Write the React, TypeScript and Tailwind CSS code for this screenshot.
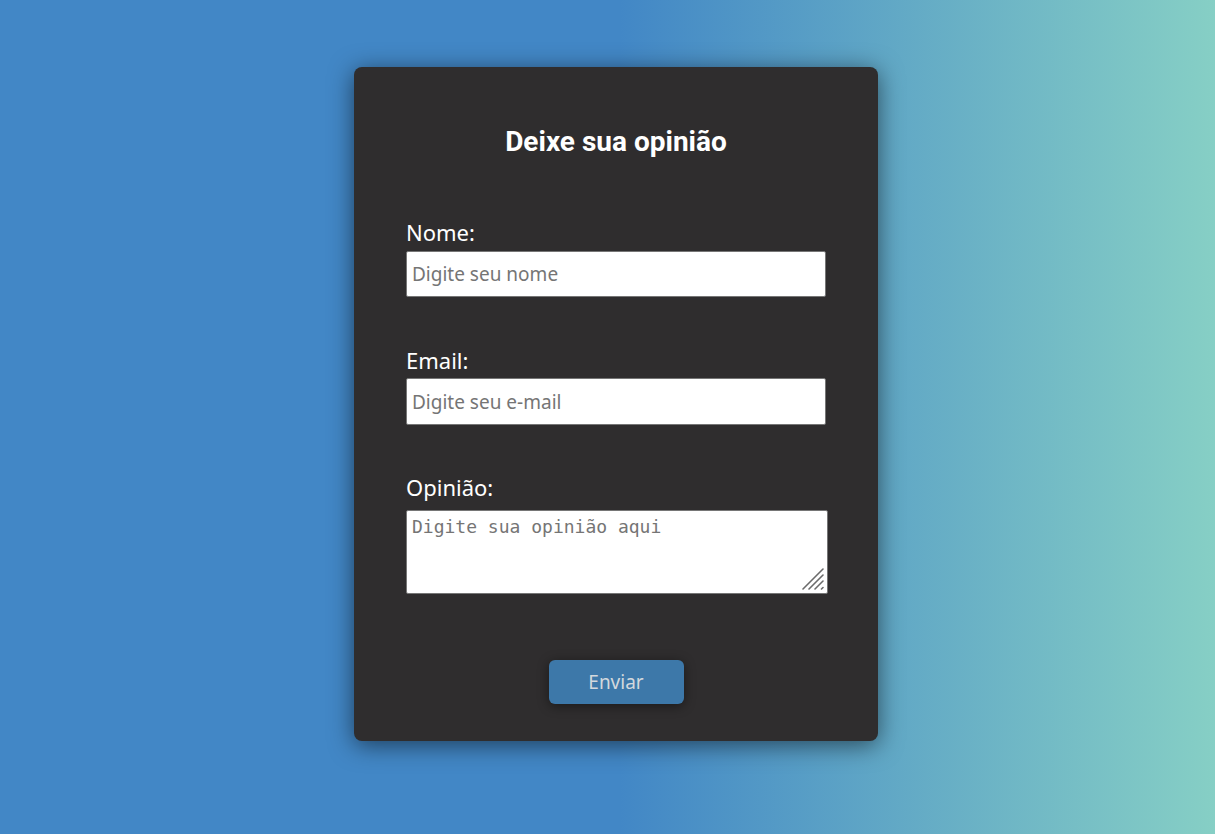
import React from 'react'

const App = () => {
  return (
    <div className="min-h-screen w-full flex justify-center items-start pt-[67px] pl-[17px] bg-[linear-gradient(to_right,#4287c6_51%,#86cfc5_100%)] font-['Roboto',sans-serif]">
      <form className="w-[524px] h-[674px] bg-[#2f2d2e] rounded-lg shadow-[0_4px_24px_rgba(0,0,0,0.55)] px-[52px] pt-[61px] flex flex-col">
        <h2 className="text-center text-white font-bold text-[28px] leading-7 mb-[64px]">
          Deixe sua opinião
        </h2>

        <label className="text-white text-[22px] leading-6 mb-[7px] font-['Noto_Sans',sans-serif]">Nome:</label>
        <input
          type="text"
          placeholder="Digite seu nome"
          className="w-[420px] h-[46px] bg-white border border-[#767676] rounded-[2px] px-[5px] text-[19px] font-['Noto_Sans',sans-serif] text-black placeholder:text-[#757575] outline-none"
        />

        <label className="text-white text-[22px] leading-6 mt-[51px] mb-[6px] font-['Noto_Sans',sans-serif]">Email:</label>
        <input
          type="email"
          placeholder="Digite seu e-mail"
          className="w-[420px] h-[47px] bg-white border border-[#767676] rounded-[2px] px-[5px] text-[19px] font-['Noto_Sans',sans-serif] text-black placeholder:text-[#757575] outline-none"
        />

        <label className="text-white text-[22px] leading-6 mt-[50px] mb-[11px] font-['Noto_Sans',sans-serif]">Opinião:</label>
        <div className="relative w-[422px] h-[84px]">
          <textarea
            placeholder="Digite sua opinião aqui"
            className="block w-full h-full resize-none bg-white border border-[#767676] rounded-[2px] px-[5px] py-[5px] text-[18px] leading-[22px] font-['DejaVu_Sans_Mono',monospace] text-black placeholder:text-[#757575] outline-none"
          />
          <svg
            className="absolute right-[4px] bottom-[4px] pointer-events-none"
            width="22"
            height="22"
            viewBox="0 0 22 22"
          >
            <g stroke="#6b6b6b" strokeWidth="1.6" strokeLinecap="round">
              <line x1="1" y1="21" x2="21" y2="1" />
              <line x1="7" y1="21" x2="21" y2="7" />
              <line x1="13" y1="21" x2="21" y2="13" />
              <line x1="19.5" y1="21" x2="21" y2="19.5" />
            </g>
          </svg>
        </div>

        <div className="flex justify-center mt-[66px]">
          <button
            type="button"
            className="w-[135px] h-[44px] rounded-md bg-[#3d78a9] text-[#d3d8dd] text-[19px] font-['Noto_Sans',sans-serif] shadow-[0_2px_12px_rgba(0,0,0,0.45)]"
          >
            Enviar
          </button>
        </div>
      </form>
    </div>
  )
}

export default App
